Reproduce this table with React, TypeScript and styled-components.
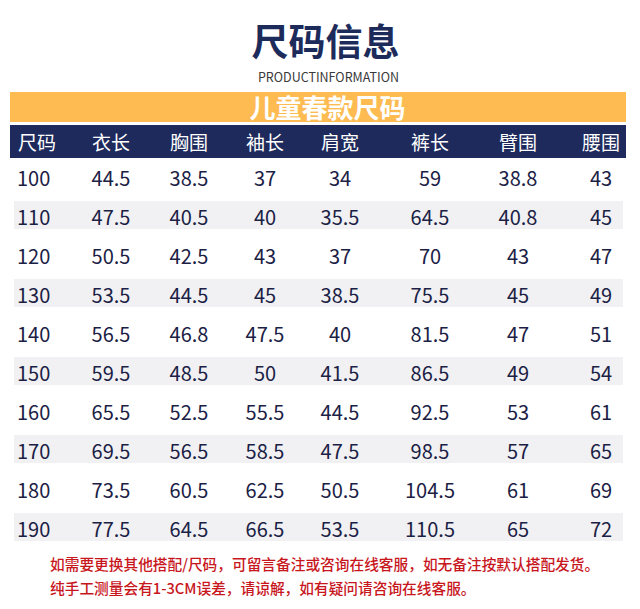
import React from "react";
import styled, { createGlobalStyle } from "styled-components";

const GlobalStyle = createGlobalStyle`
  html, body { margin: 0; padding: 0; background: #ffffff; }
  body { font-family: "Noto Sans CJK SC", "Noto Sans", sans-serif; }
`;

const Page = styled.div`
  width: 640px;
  height: 609px;
  overflow: hidden;
  background: #ffffff;
  font-family: "Noto Sans CJK SC", "Noto Sans", sans-serif;
`;

const Title = styled.h1`
  margin: 18px 0 0;
  padding-left: 11px;
  height: 44px;
  line-height: 44px;
  font-size: 37px;
  font-weight: 700;
  color: #1d2b5b;
  text-align: center;
`;

const Subtitle = styled.div`
  margin-top: 7px;
  padding-left: 17px;
  height: 16px;
  line-height: 16px;
  font-size: 12.5px;
  color: #3a3a3a;
  text-align: center;
`;

const Band = styled.div`
  margin: 7px 14px 0 10px;
  height: 30px;
  line-height: 30px;
  padding-left: 19px;
  background: #fdbb52;
  color: #ffffff;
  font-size: 26px;
  font-weight: 700;
  text-align: center;
`;

const Table = styled.div`
  display: flex;
  flex-direction: column;
  margin: 3px 14px 0 10px;
`;

const headerCols = "62px 78px 78px 74px 76px 104px 78px 66px";
const rowCols = "58px 78px 78px 74px 76px 104px 78px 63px";

const HeaderRow = styled.div`
  display: grid;
  grid-template-columns: ${headerCols};
  height: 33px;
  background: #1e2a5c;
  color: #ffffff;
  font-size: 19px;
  line-height: 33px;
`;

const BodyRow = styled.div<{ $shade: boolean }>`
  display: grid;
  grid-template-columns: ${rowCols};
  height: 28px;
  margin: 4px 3px 7px 4px;
  background: ${(p) => (p.$shade ? "#f1f1f3" : "transparent")};
  color: #1b2145;
  font-size: 20px;
  line-height: 25px;
  padding-top: 3px;
  box-sizing: border-box;
`;

const Cell = styled.div<{ $first?: boolean; $pl?: number; $pr?: number }>`
  text-align: ${(p) => (p.$first ? "left" : "center")};
  padding-left: ${(p) => p.$pl ?? 0}px;
  padding-right: ${(p) => p.$pr ?? 0}px;
  white-space: nowrap;
`;

const Notes = styled.div`
  padding-left: 50px;
  margin-top: 4px;
  color: #c8161d;
  font-size: 14.7px;
  line-height: 23.5px;
  font-weight: 500;
  white-space: nowrap;
`;

const headers = ["尺码", "衣长", "胸围", "袖长", "肩宽", "裤长", "臂围", "腰围"];

const rows: string[][] = [
  ["100", "44.5", "38.5", "37", "34", "59", "38.8", "43"],
  ["110", "47.5", "40.5", "40", "35.5", "64.5", "40.8", "45"],
  ["120", "50.5", "42.5", "43", "37", "70", "43", "47"],
  ["130", "53.5", "44.5", "45", "38.5", "75.5", "45", "49"],
  ["140", "56.5", "46.8", "47.5", "40", "81.5", "47", "51"],
  ["150", "59.5", "48.5", "50", "41.5", "86.5", "49", "54"],
  ["160", "65.5", "52.5", "55.5", "44.5", "92.5", "53", "61"],
  ["170", "69.5", "56.5", "58.5", "47.5", "98.5", "57", "65"],
  ["180", "73.5", "60.5", "62.5", "50.5", "104.5", "61", "69"],
  ["190", "77.5", "64.5", "66.5", "53.5", "110.5", "65", "72"],
];

const headerPad = [
  { pl: 8, pr: 0 },
  { pl: 0, pr: 0 },
  { pl: 0, pr: 0 },
  { pl: 0, pr: 0 },
  { pl: 0, pr: 0 },
  { pl: 0, pr: 0 },
  { pl: 0, pr: 6 },
  { pl: 16, pr: 0 },
];

const rowPad = [
  { pl: 3, pr: 0 },
  { pl: 0, pr: 0 },
  { pl: 0, pr: 0 },
  { pl: 0, pr: 0 },
  { pl: 0, pr: 0 },
  { pl: 0, pr: 0 },
  { pl: 0, pr: 6 },
  { pl: 19, pr: 0 },
];

export default function App() {
  return (
    <Page>
      <GlobalStyle />
      <Title>尺码信息</Title>
      <Subtitle>PRODUCTINFORMATION</Subtitle>
      <Band>儿童春款尺码</Band>
      <Table>
        <HeaderRow>
          {headers.map((h, i) => (
            <Cell key={h} $first={i === 0} $pl={headerPad[i].pl} $pr={headerPad[i].pr}>
              {h}
            </Cell>
          ))}
        </HeaderRow>
        {rows.map((r, ri) => (
          <BodyRow key={r[0]} $shade={ri % 2 === 1}>
            {r.map((v, i) => (
              <Cell key={i} $first={i === 0} $pl={rowPad[i].pl} $pr={rowPad[i].pr}>
                {v}
              </Cell>
            ))}
          </BodyRow>
        ))}
      </Table>
      <Notes>
        如需要更换其他搭配/尺码，可留言备注或咨询在线客服，如无备注按默认搭配发货。
        <br />
        纯手工测量会有1-3CM误差，请谅解，如有疑问请咨询在线客服。
      </Notes>
    </Page>
  );
}
